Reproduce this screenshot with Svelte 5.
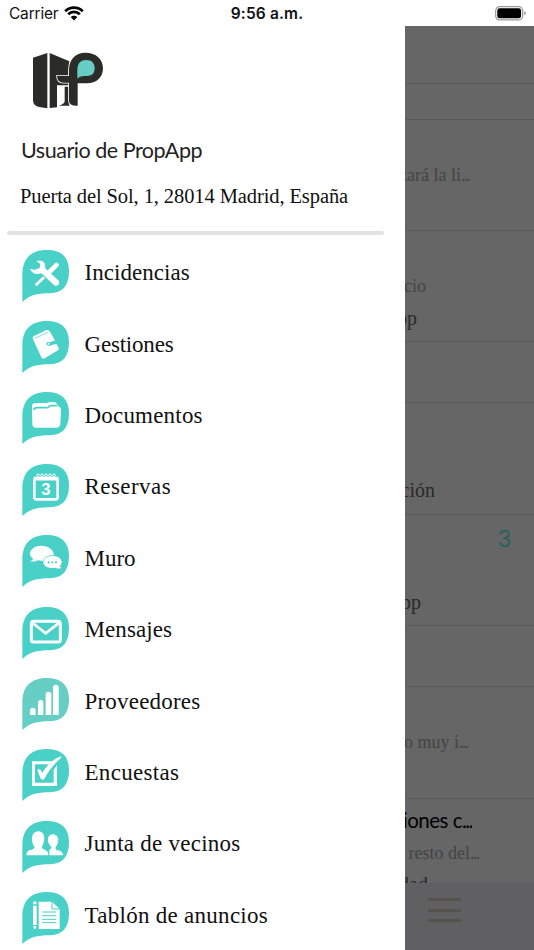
<script>
  const menu = [
    { icon: 'tools', label: 'Incidencias', spacing: 0.05 },
    { icon: 'wallet', label: 'Gestiones', spacing: -0.2 },
    { icon: 'folder', label: 'Documentos', spacing: 0.2 },
    { icon: 'calendar', label: 'Reservas', spacing: 0.45 },
    { icon: 'chat', label: 'Muro', spacing: 0 },
    { icon: 'mail', label: 'Mensajes', spacing: 0.1 },
    { icon: 'bars', label: 'Proveedores', spacing: 0.2, soft: true },
    { icon: 'check', label: 'Encuestas', spacing: 0.3 },
    { icon: 'people', label: 'Junta de vecinos', spacing: 0.25 },
    { icon: 'notes', label: 'Tablón de anuncios', spacing: 0.28 },
  ];

  // gap: space above the line, end: where the line stops inside the row
  const feed = [
    { h: 58, lines: [] },
    { h: 36, lines: [] },
    { h: 111, lines: [{ text: 'zará la li', kind: 'muted', gap: 42, end: 65, more: true }] },
    {
      h: 111,
      lines: [
        { text: 'cio', kind: 'muted', gap: 42, end: 21 },
        { text: 'pp', kind: 'author', gap: 6, end: 12 },
      ],
    },
    { h: 61, lines: [] },
    { h: 112, lines: [{ text: 'ción', kind: 'author', gap: 74, end: 30 }] },
    {
      h: 111,
      lines: [
        { text: '3', kind: 'count', gap: 11, end: 106 },
        { text: 'pp', kind: 'author', gap: 37, end: 16 },
      ],
    },
    { h: 61, lines: [] },
    { h: 112, lines: [{ text: 'o muy i', kind: 'muted', gap: 42, end: 63, more: true }] },
    {
      h: 110,
      lines: [
        { text: 'iones c', kind: 'title', gap: 8, end: 67, more: true },
        { text: 'resto del', kind: 'muted', gap: 7, end: 74, more: true },
        { text: 'dad', kind: 'author', gap: 5, end: 23 },
      ],
    },
  ];
</script>

<div class="app">
  <header class="status">
    <div class="carrier">
      <span>Carrier</span>
      <svg width="20" height="15" viewBox="0 0 20 15">
        <path d="M1.2 5.2C6.1.4 13.9.4 18.8 5.2" />
        <path d="M4.2 8.3C7.5 5.1 12.5 5.1 15.8 8.3" />
        <path class="dot" d="M6.7 11.1C8.5 9.3 11.5 9.3 13.3 11.1L10 14.5Z" />
      </svg>
    </div>
    <div class="time">9:56 a.m.</div>
    <svg class="battery" width="32" height="15" viewBox="0 0 32 15">
      <rect x=".7" y=".7" width="27" height="13.2" rx="4" />
      <rect class="level" x="2.3" y="2.3" width="23.8" height="10" rx="2.4" />
      <path class="level tip" d="M29.2 5.2q1.7.6 1.7 2.1t-1.7 2.1z" />
    </svg>
  </header>

  <div class="body">
    <aside class="drawer">
      <svg class="logo" width="72" height="58" viewBox="0 0 216 174">
        <path class="ink" d="M3 17L46 3V169L26 166Q3 164 3 145Z" />
        <path class="ink" d="M53 3L112 28V100H75V166L53 168Z" />
        <path class="ink" d="M98 104H112V161H81Q97 157 98 148Z" />
        <path class="ink letter" d="M111 92H94Q76 92 75 72H111V54C111 22 130 2 160 2C193 2 213 22 213 49C213 77 193 94 165 94H137V161Q111 162 111 147Z" />
        <path class="drop" d="M136 80V54C136 34 145 24 163 24C180 24 188 34 188 49C188 66 178 72 165 72C150 72 143 73 136 80Z" />
      </svg>
      <div class="user">Usuario de PropApp</div>
      <div class="address">Puerta del Sol, 1, 28014 Madrid, España</div>
      <hr />
      <nav>
        {#each menu as item}
          <div class="item">
            <svg class="bubble" class:soft={item.soft} width="47" height="52" viewBox="0 0 141 156">
              <path class="shape" d="M1 156V72C2 27 25 0 74 0C118 0 141 20 141 64C141 108 121 129 84 130C44 130 22 136 1 156Z" />
              {#if item.icon === 'tools'}
                <path class="line" d="M41 106L66 82" stroke-width="8" />
                <path class="line" d="M72 75L81 67" stroke-width="6" />
                <path d="M76 62L99 40Q103 36 107 39Q113 42 110 48L89 70Q80 71 76 62Z" />
                <path d="M43 33Q58 29 67 38Q72 46 69 54L110 92Q114 98 109 104Q102 110 95 104L58 70Q41 75 30 66L23 57L39 59L53 54L55 42Z" />
              {:else if item.icon === 'wallet'}
                <path d="M32 52Q31 47 36 45L73 27Q79 26 83 31L90 43L99 59L84 64Q76 61 73 66Q73 73 81 75L103 68L110 80Q112 85 108 88L69 111Q62 116 58 109Z" />
                <path class="cut" d="M38 52L78 34" stroke-width="2" />
                <path class="cut" d="M104 60L83 67" stroke-width="5" />
                <circle cx="80" cy="68" r="3" />
              {:else if item.icon === 'folder'}
                <path d="M30 48V43Q30 33 41 33H74L80 31H101L109 43L114 46Q118 49 117 57L115 96Q114 107 103 107H42Q31 107 31 96Z" />
                <path class="cut" d="M35 54Q37 47 45 47H77L86 41H105" stroke-width="5" />
              {:else if item.icon === 'calendar'}
                <rect class="line" x="37" y="43" width="70" height="63" rx="7" stroke-width="8" />
                <path class="line" d="M35 44H109" stroke-width="11" />
                {#each [48, 60, 72, 84, 96] as x}
                  <circle class="line" cx={x} cy="34" r="4" stroke-width="3" />
                {/each}
                <text x="72" y="92" text-anchor="middle">3</text>
              {:else if item.icon === 'chat'}
                <path d="M24 79Q33 76 33 71Q23 64 24 55C26 41 40 32 57 32C77 32 92 42 95 56V61C76 60 67 68 63 78L48 76Q35 82 24 79Z" />
                <path d="M119 98Q111 103 100 98C80 102 64 94 64 81C65 70 77 63 91 63C108 63 119 71 119 82Q119 90 112 94Q114 97 119 98Z" />
                <circle class="hole" cx="80" cy="82" r="3.2" />
                <circle class="hole" cx="91" cy="82" r="3.2" />
                <circle class="hole" cx="102" cy="82" r="3.2" />
              {:else if item.icon === 'mail'}
                <rect class="line" x="28" y="43" width="87" height="62" rx="7" stroke-width="9" />
                <path class="line" d="M31 47L71 79L112 47" stroke-width="8" />
              {:else if item.icon === 'bars'}
                <path d="M24 111V98a8 8 0 0 1 17 0V111ZM48 111V74a8 8 0 0 1 16 0V111ZM71 111V50a8 8 0 0 1 17 0V111ZM93 111V29a8 8 0 0 1 17 0V111Z" />
              {:else if item.icon === 'check'}
                <path d="M30 37H96L88 46H39V101H95V62L105 49V111H30Z" />
                <path d="M46 63Q55 56 60 72C75 49 92 32 116 22L118 26C96 45 80 65 66 91Q59 94 55 87Z" />
              {:else if item.icon === 'people'}
                <path d="M82 103V91Q80 86 86 84L89 80Q75 64 78 52Q81 40 93 40Q106 41 109 54Q109 69 100 80L103 87Q123 89 123 103Z" />
                <path d="M13 103Q14 88 25 87Q37 85 38 78Q29 68 30 51Q32 31 49 31Q67 32 67 52Q66 69 59 79Q62 87 71 88Q79 92 79 103Z" />
              {:else}
                <path d="M50 29H90L113 51V111H50Z" />
                <path class="cut" d="M90 28V51H114M60 60H103M60 71H103M60 82H103M60 92H103" stroke-width="3" />
                <path d="M33 33Q33 27 39 28Q44 28 44 33V37H33ZM33 41H44V99H33ZM34 102H43L42 108L38 112L35 108Z" />
              {/if}
            </svg>
            <span style="letter-spacing: {item.spacing}px">{item.label}</span>
          </div>
        {/each}
      </nav>
    </aside>

    <main>
      <div class="feed">
        {#each feed as row}
          <div class="row" style="height: {row.h}px">
            {#each row.lines as line}
              <div class="text {line.kind}" style="width: {line.end}px; margin-top: {line.gap}px">
                <span>{line.text}{#if line.more}<span class="dots">...</span>{/if}</span>
              </div>
            {/each}
          </div>
        {/each}
      </div>
      <footer>
        <div class="burger"><i></i><i></i><i></i></div>
      </footer>
    </main>
  </div>
</div>

<style>
  :global(body) {
    margin: 0;
    background: #fff;
  }

  .app {
    width: 534px;
    height: 950px;
    overflow: hidden;
    color: #111;
    font-family: "Liberation Serif", serif;
  }

  .status {
    display: grid;
    grid-template-columns: 1fr auto 1fr;
    align-items: center;
    height: 26px;
    padding: 0 7px 0 9px;
    box-sizing: border-box;
    font: 15.5px/26px Inter, sans-serif;
  }

  .carrier {
    display: flex;
    align-items: center;
    gap: 6px;
    letter-spacing: -0.2px;
  }

  .carrier svg {
    margin-bottom: 1px;
  }

  .carrier span {
    padding-top: 1px;
  }

  .carrier path {
    fill: none;
    stroke: #000;
    stroke-width: 2.7;
  }

  .carrier .dot {
    fill: #000;
    stroke: none;
  }

  .time {
    padding: 1px 2px 0 0;
    font-weight: 600;
    letter-spacing: 0.15px;
  }

  .battery {
    justify-self: end;
    fill: none;
    stroke: #999;
    stroke-width: 1.2;
  }

  .battery .level {
    fill: #000;
    stroke: none;
  }

  .battery .tip {
    fill: #999;
  }

  .body {
    display: flex;
    height: 924px;
  }

  .drawer {
    flex: none;
    width: 405px;
    overflow: hidden;
    background: #fff;
  }

  .logo {
    display: block;
    margin: 26px 0 0 32px;
  }

  .ink {
    fill: #2b2c27;
  }

  .letter {
    stroke: #fff;
    stroke-width: 5;
    paint-order: stroke;
  }

  .drop {
    fill: #66cdc5;
  }

  .user {
    margin: 25px 0 0 21px;
    font: 21.5px/30px Lato, sans-serif;
    letter-spacing: -0.47px;
    color: #222;
    white-space: nowrap;
  }

  .address {
    margin: 18px 0 0 20px;
    font-size: 20.5px;
    line-height: 26px;
    letter-spacing: -0.1px;
    white-space: nowrap;
  }

  hr {
    width: 377px;
    height: 4px;
    margin: 22px 0 0 7px;
    border: 0;
    border-radius: 2px;
    background: #e2e2e4;
  }

  nav {
    padding-top: 2.5px;
  }

  .item {
    display: flex;
    align-items: center;
    gap: 15.5px;
    height: 71.4px;
    padding-left: 22px;
    font-size: 23px;
    line-height: 30px;
    white-space: nowrap;
  }

  .bubble {
    --teal: #49d1c7;
    flex: none;
    margin-top: 5px;
    overflow: visible;
    fill: #fff;
  }

  .bubble.soft {
    --teal: #66cec5;
  }

  .bubble .shape,
  .bubble .hole {
    fill: var(--teal);
  }

  .bubble .line {
    fill: none;
    stroke: #fff;
  }

  .bubble .cut {
    fill: none;
    stroke: var(--teal);
  }

  .bubble text {
    font: bold 50px "Liberation Sans", sans-serif;
  }

  main {
    display: flex;
    flex: 1;
    flex-direction: column;
    min-width: 0;
    overflow: hidden;
    background: #666;
  }

  .feed {
    flex: 1;
    min-height: 0;
    overflow: hidden;
  }

  .row {
    display: flow-root;
    box-sizing: border-box;
    border-bottom: 1px solid #5a5a5a;
  }

  .text {
    display: flex;
    justify-content: flex-end;
    overflow: hidden;
    line-height: 26px;
    white-space: nowrap;
  }

  .muted {
    font-size: 18px;
    color: #444;
  }

  .author {
    font-size: 20px;
    color: #292929;
  }

  .title {
    font: 20.5px/26px Lato, sans-serif;
    letter-spacing: -0.5px;
    color: #000;
  }

  .count {
    font: 23px/26px "Liberation Sans", sans-serif;
    color: #28615d;
  }

  .dots {
    letter-spacing: -1.5px;
  }

  footer {
    flex: none;
    height: 67px;
    background: #606062;
  }

  .burger {
    display: flex;
    flex-direction: column;
    gap: 7.5px;
    padding: 15px 0 0 23px;
  }

  .burger i {
    width: 33px;
    height: 3px;
    border-radius: 1px;
    background: #54534b;
  }
</style>
